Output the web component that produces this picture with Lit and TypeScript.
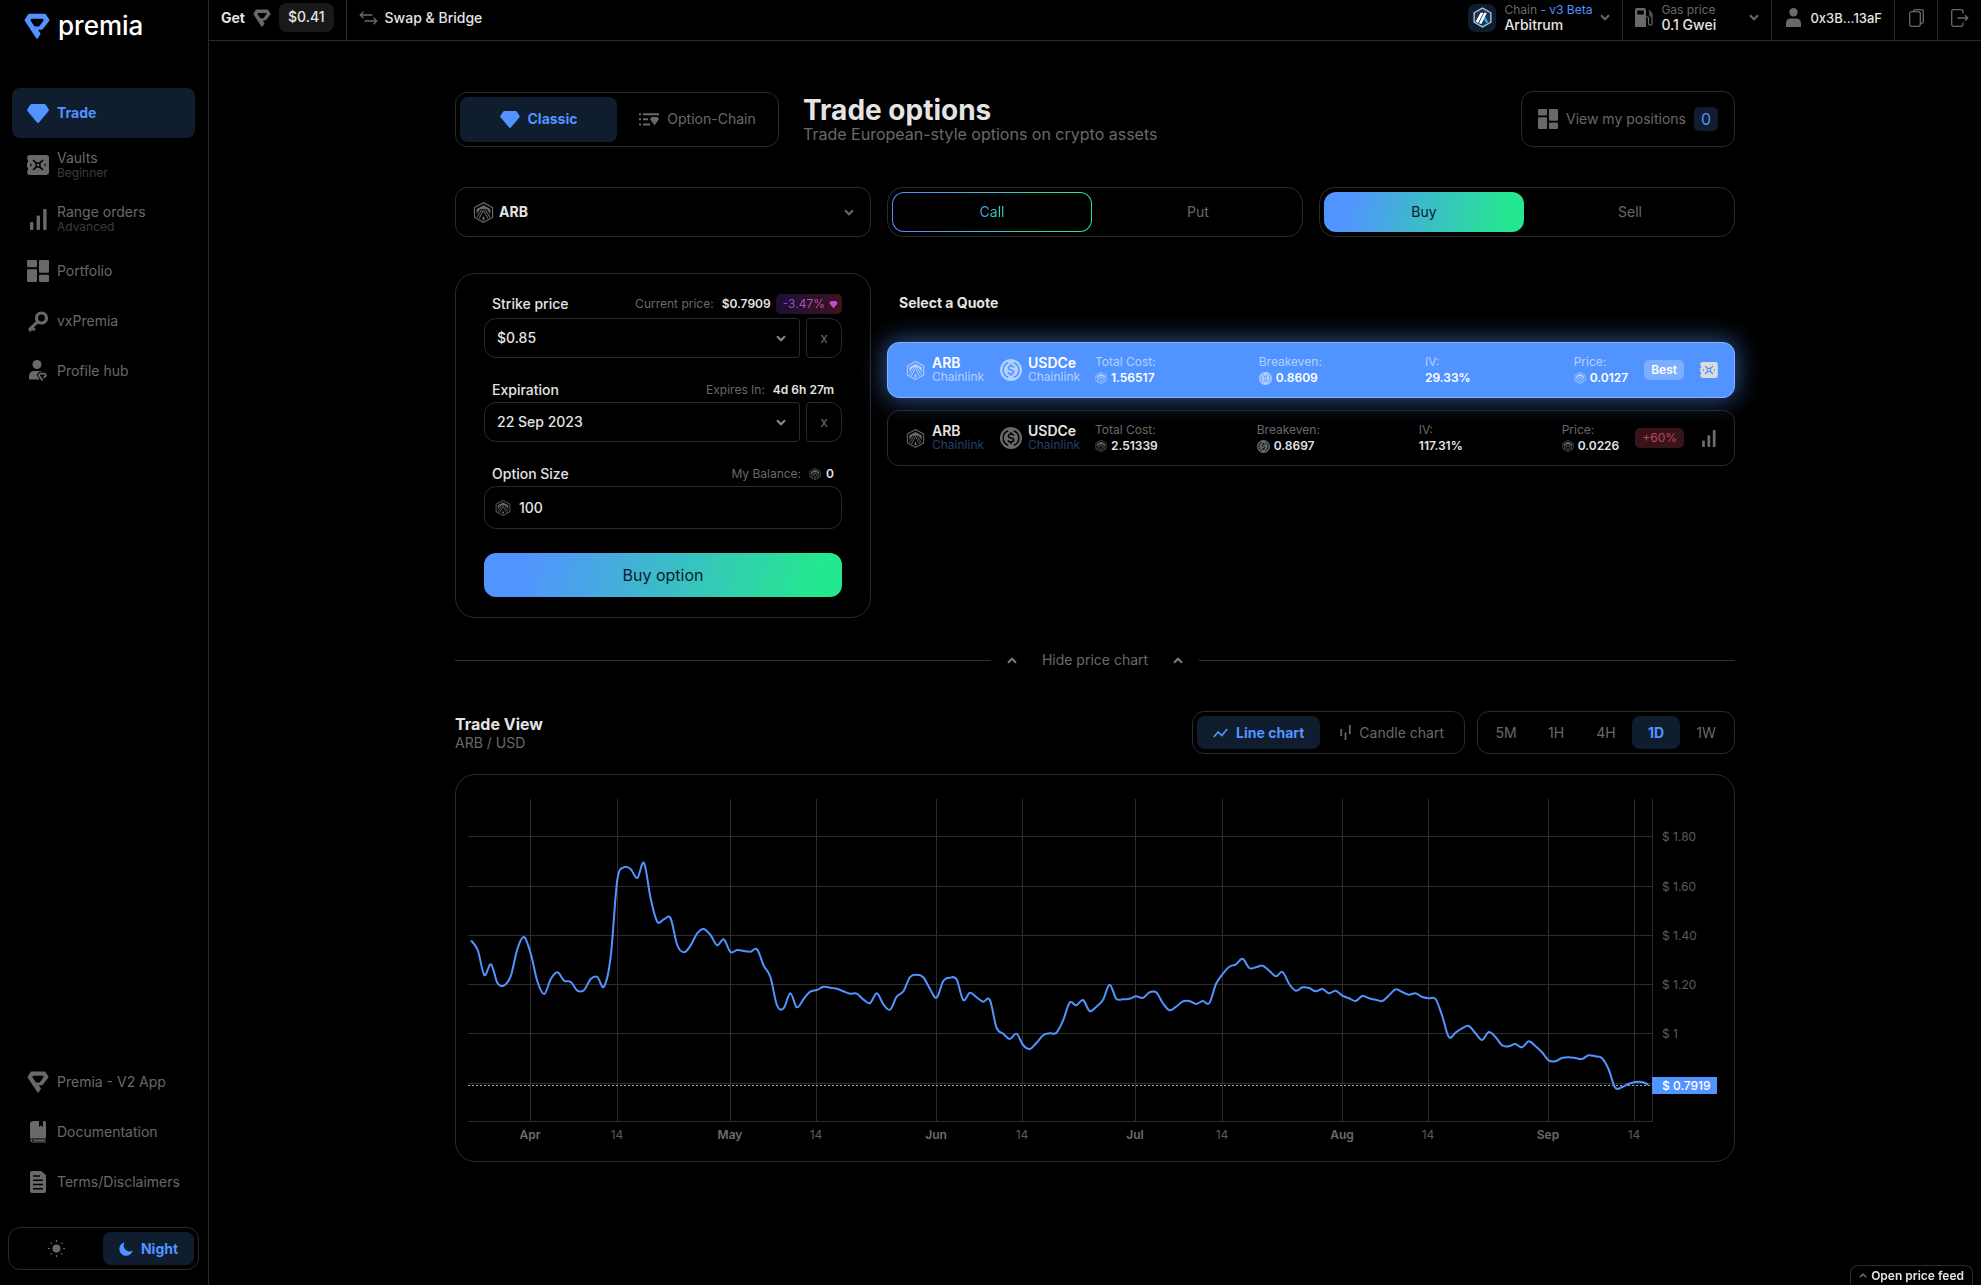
import { LitElement, html, svg, css, nothing, TemplateResult } from "lit";
import { customElement, state } from "lit/decorators.js";
import { classMap } from "lit/directives/class-map.js";

/* ---------- icons ---------- */

const icon = (w: number, h: number, box: string, body: unknown) =>
  html`<svg class="icon" width=${w} height=${h} viewBox=${box} fill="currentColor" aria-hidden="true">${body}</svg>`;

const premiaIcon = (size: number) =>
  icon(size, size, "0 0 26 26", svg`<path fill-rule="evenodd" d="M5.500.7h15q1 0 1.500.8l3.200 5q.5.800-.1 1.600L19 16q-.6.700-1.500.7h-3.400l2.200 3.600q.4.700 0 1.300l-2.500 3.600q-.8 1-1.600 0L.9 8.100q-.6-.8-.1-1.600L4 1.500Q4.500.7 5.500.7zM7.400 5.700 6.300 7.200l4.300 6.300h4.400l4.800-6.300-1-1.500z"/>`);

const diamondIcon = (w = 22, h = 19) =>
  icon(w, h, "0 0 22 19", svg`<path d="M4.600 0h12.800q.8 0 1.300.7l2.800 4.200q.8 1.200-.1 2.300l-9.200 11.100q-1.200 1.400-2.400 0L.6 7.200q-.9-1.100-.1-2.300L3.300.7Q3.800 0 4.600 0z"/>`);

const vaultIcon = (w = 22, h = 20) =>
  icon(w, h, "0 0 22 20", svg`
    <path d="M3 0h16q3 0 3 3v14q0 3-3 3H3q-3 0-3-3v-1.500h1v-3H0v-5h1v-3H0V3q0-3 3-3z"/>
    <path d="m6 5 3.600 3.400M16 5l-3.600 3.400M6 15l3.600-3.400M16 15l-3.600-3.400" stroke="var(--cut)" stroke-width="1.600"/>
    <path d="M4 8.800v2.400m14-2.400v2.400" stroke="var(--cut)" stroke-width="1.200"/>
    <rect x="9" y="8" width="4" height="4" rx="1.500" fill="none" stroke="var(--cut)" stroke-width="1.500"/>`);

const barsIcon = (w = 17, h = 21) =>
  icon(w, h, "0 0 17 21", svg`<rect x="0" y="13" width="3.400" height="8" rx="1"/><rect x="6.600" y="6.500" width="3.400" height="14.500" rx="1"/><rect x="13.200" y="0" width="3.400" height="21" rx="1"/>`);

const tilesIcon = (w = 22) =>
  icon(w, w, "0 0 22 22", svg`<rect width="10" height="7.200" rx="1.200"/><rect y="9.200" width="10" height="12.800" rx="1.200"/><rect x="12" width="10" height="12.800" rx="1.200"/><rect x="12" y="14.800" width="10" height="7.200" rx="1.200"/>`);

const keyIcon = icon(22, 21, "0 0 22 21", svg`
  <circle cx="14.500" cy="7" r="5" fill="none" stroke="currentColor" stroke-width="3.200"/>
  <path d="m10.800 10.600-8.600 8M5 16l2.600 3.400M2.200 17.800l2 2.200" fill="none" stroke="currentColor" stroke-width="2.800"/>`);

const profileIcon = icon(20, 22, "0 0 20 22", svg`
  <circle cx="9" cy="4.500" r="4.500"/>
  <path d="M1 19.500v-3q0-5.500 5.500-5.500h5q2 0 3.200.8H11L8.800 15l3 4.500z"/>
  <path d="M14.600 20.600 11 15.500l1.200-1.900h4.600l1.200 1.900-2.400 2.400" fill="none" stroke="currentColor" stroke-width="1.800"/>`);

const bookIcon = icon(16, 22, "0 0 16 22", svg`
  <path d="M3 0h6v6l2-1.500L13 6V0h1.500q1.500 0 1.500 1.500V17H2.500q-1 0-2.500 1V3q0-3 3-3z"/>
  <path d="M16 21H3q-2 0-2-1.500T3 18h13M3.500 19.500H15" fill="none" stroke="currentColor" stroke-width="1.200"/>`);

const pageIcon = icon(16, 22, "0 0 16 22", svg`
  <path d="M2 0h9l5 4v16q0 2-2 2H2q-2 0-2-2V2q0-2 2-2z"/>
  <path d="M3 5h7M3 9.300h10M3 13.500h10M3 17.700h10" stroke="var(--cut)" stroke-width="1.600"/>`);

const sunIcon = icon(17, 17, "0 0 17 17", svg`
  <circle cx="8.500" cy="8.500" r="4"/>
  <path d="M8.500 0v2m0 13v2M0 8.500h2m13 0h2M2.600 2.600l1.300 1.300m9.200 9.200 1.300 1.300m0-11.800-1.300 1.300M3.900 13.100l-1.300 1.300" stroke="currentColor" stroke-width="1.200"/>`);

const moonIcon = icon(14, 14, "0 0 14 14", svg`<path d="M5.600.3a6.800 6.800 0 1 0 8.100 8.300A6 6 0 0 1 5.600.3z"/>`);

const chevron = (up = false) =>
  icon(10, 7, "0 0 10 7", svg`<path d=${up ? "m1 5.700 4-4 4 4" : "m1 1.300 4 4 4-4"} fill="none" stroke="currentColor" stroke-width="2"/>`);

const swapIcon = icon(19, 14, "0 0 19 14", svg`
  <path d="M13.500 4H1.200m3.300-3.300L1.200 4l3.300 3.300M5.500 10h12.300m-3.300-3.300 3.300 3.300-3.300 3.300" fill="none" stroke="currentColor" stroke-width="1.300"/>`);

const gasIcon = icon(18, 19, "0 0 18 19", svg`
  <path fill-rule="evenodd" d="M2 0h7q2 0 2 2v17H0V2q0-2 2-2zm.2 2.500v4h6.600v-4z"/>
  <path d="M11 9h1.500q1 0 1 1v5.500a1.700 1.700 0 0 0 3.500 0V6l-3-3.500M17 8h-2V5" fill="none" stroke="currentColor" stroke-width="1.200"/>`);

const personIcon = icon(15, 19, "0 0 15 19", svg`<circle cx="7.500" cy="4.200" r="4.200"/><path d="M0 19v-3.500q0-5 5-5h5q5 0 5 5V19z"/>`);

const copyIcon = icon(15, 18, "0 0 15 18", svg`
  <rect x=".7" y="2.700" width="10.600" height="14.600" rx="2"/><path d="M4.500 2.500Q4.500.7 6.300.7h6.200q1.800 0 1.800 1.800v10q0 1.800-2.500 1.800"/>`);

const exitIcon = icon(18, 18, "0 0 18 18", svg`<path d="M12 4.500v-2Q12 .7 10.200.7H2.500Q.7.7.7 2.500v13q0 1.800 1.800 1.800h7.700q1.800 0 1.800-1.800v-2M6.500 9h10.300M14 6.200 16.800 9 14 11.800"/>`);

const chainIcon = icon(19, 21, "0 0 18 20", svg`
  <path d="m9 1 8 4.500v9L9 19l-8-4.500v-9z" fill="#213147" stroke="#9dcced" stroke-width="1.300"/>
  <path d="m11.300 9 3.400 5.300-2 1.300-2.600-4.200z" fill="#28a0f0"/>
  <path d="M7.200 5.500H10L4.800 15.200l-2.300-1.300zM10.700 5.500h2.400L8 16.300l-2.300-.8z" fill="#fff"/>`);

const arbIcon = (w: number) =>
  icon(w, w, "0 0 20 20", svg`
    <path d="m10 .6 8.600 4.700v9.400L10 19.400l-8.600-4.700V5.300z" fill="none" stroke="currentColor" stroke-width="1.100"/>
    <path d="M3.500 11.500V6.700L10 3.100l6.500 3.600v4.800L13.200 7H6.800z"/>
    <path d="m8.200 7.600-4.500 7M10 8l-4.300 7.800M11.800 7.600l4.500 7M10 8l4.300 7.800" fill="none" stroke="currentColor" stroke-width="1"/>
    <path d="m10 13 1.400 3.200L10 17.600l-1.400-1.400z"/>`);

const usdcIcon = (w: number) =>
  icon(w, w, "0 0 22 22", svg`
    <circle cx="11" cy="11" r="11"/>
    <path d="M8.200 3.700a7.800 7.800 0 0 0 0 14.600M13.800 3.700a7.800 7.800 0 0 1 0 14.600M13.700 8.700q-.4-1.700-2.700-1.700t-2.600 1.900Q8.400 10.500 11 11t2.700 2.200Q13.500 15 11 15t-2.800-1.900M11 5v2m0 8v2" fill="none" stroke="var(--cut)" stroke-width="1.500"/>`);

const listIcon = icon(20, 13, "0 0 20 13", svg`
  <path d="M0 1.200h2m2 0h16M0 6.200h2m2 0h5M0 11.500h2m2 0h7" stroke="currentColor" stroke-width="2"/>
  <path d="M12.500 4h6l1.500 2.200-4.500 6-4.500-6z"/>`);

const lineIcon = icon(15, 10, "0 0 15 10", svg`<path d="m.8 9 4.400-5 3.600 3.600L14.200 1" fill="none" stroke="currentColor" stroke-width="1.700"/>`);

const candleIcon = icon(11, 15, "0 0 11 15", svg`<path d="M1.200 4v7M5.500 7.500V15M9.800 0v9" stroke="currentColor" stroke-width="1.700"/>`);

/* ---------- data ---------- */

interface NavItem { label: string; note?: string; icon: TemplateResult; }

const NAV: NavItem[] = [
  { label: "Trade", icon: diamondIcon() },
  { label: "Vaults", note: "Beginner", icon: vaultIcon() },
  { label: "Range orders", note: "Advanced", icon: barsIcon() },
  { label: "Portfolio", icon: tilesIcon() },
  { label: "vxPremia", icon: keyIcon },
  { label: "Profile hub", icon: profileIcon },
];

const LINKS: NavItem[] = [
  { label: "Premia - V2 App", icon: premiaIcon(22) },
  { label: "Documentation", icon: bookIcon },
  { label: "Terms/Disclaimers", icon: pageIcon },
];

const QUOTES = [
  { cost: "1.56517", even: "0.8609", iv: "29.33%", price: "0.0127", badge: "Best" },
  { cost: "2.51339", even: "0.8697", iv: "117.31%", price: "0.0226", badge: "+60%" },
];

// One sample per day from 23 March, in thirds of a chart unit; 87 is the plot's top edge.
const SAMPLES = [
  511, 540, 615, 583, 640, 646, 617, 535, 501, 553, 635, 672, 627, 607, 632, 636, 662, 660, 627, 621,
  650, 560, 330, 292, 297, 324, 279, 385, 455, 448, 445, 525, 547, 527, 490, 477, 495, 526, 508, 546,
  540, 543, 545, 538, 587, 620, 706, 715, 670, 712, 687, 665, 660, 650, 653, 656, 664, 671, 671, 689,
  699, 670, 703, 719, 680, 664, 621, 614, 622, 657, 683, 633, 623, 628, 690, 668, 682, 695, 690, 773,
  791, 807, 791, 825, 837, 819, 796, 790, 788, 752, 698, 706, 690, 723, 710, 690, 644, 686, 688, 686,
  679, 684, 667, 667, 699, 721, 710, 694, 693, 702, 693, 699, 642, 612, 590, 583, 566, 594, 592, 587,
  602, 619, 606, 642, 662, 652, 654, 664, 657, 670, 662, 677, 685, 693, 678, 685, 689, 693, 676, 658,
  666, 674, 670, 681, 685, 687, 738, 801, 788, 775, 768, 790, 810, 786, 801, 826, 829, 822, 832, 814,
  828, 847, 871, 874, 864, 862, 864, 867, 856, 859, 864, 897, 953, 952, 942, 936, 936, 944,
];

const MONTHS: [number, string][] = [
  [62, "Apr"], [149, "14"], [262, "May"], [348, "14"], [468, "Jun"], [554, "14"],
  [667, "Jul"], [754, "14"], [874, "Aug"], [960, "14"], [1080, "Sep"], [1166, "14"],
];

const LEVELS: [number, string][] = [
  [37, "$ 1.80"], [87, "$ 1.60"], [136, "$ 1.40"], [185, "$ 1.20"], [234, "$ 1"], [284, ""],
];

const curve = (): string => {
  const pts = SAMPLES.map((s, i) => [3 + i * 6.652, s / 3 - 29]);
  let d = `M${pts[0][0]} ${pts[0][1]}`;
  for (let i = 0; i < pts.length - 1; i++) {
    const a = pts[Math.max(0, i - 1)], b = pts[i], c = pts[i + 1], e = pts[Math.min(pts.length - 1, i + 2)];
    const n = [b[0] + (c[0] - a[0]) / 6, b[1] + (c[1] - a[1]) / 6, c[0] - (e[0] - b[0]) / 6, c[1] - (e[1] - b[1]) / 6, c[0], c[1]];
    d += "C" + n.map((v) => v.toFixed(1)).join(" ");
  }
  return d;
};

/* ---------- shared styles ---------- */

const base = css`
  *, *::before, *::after { box-sizing: border-box; }
  .icon { display: block; flex: none; }
  button, select, input {
    font: inherit; color: inherit; background: none; border: 0; margin: 0; padding: 0;
    border-radius: 0; appearance: none; outline-offset: 2px;
  }
  button, select { cursor: pointer; }
  a { color: inherit; text-decoration: none; }
  h1, h2, p { margin: 0; }
`;

/* ---------- sidebar ---------- */

@customElement("premia-sidebar")
export class PremiaSidebar extends LitElement {
  static styles = [base, css`
    :host {
      display: flex; flex-direction: column; width: 209px; flex: none;
      border-right: 1px solid var(--line); color: var(--dim); font-size: 14px; line-height: 18px;
    }
    .logo { display: flex; align-items: center; gap: 8px; height: 52px; padding-left: 24px; color: var(--blue); }
    .word { color: #fff; font-size: 26px; line-height: 28px; font-weight: 500; }
    .nav { display: flex; flex-direction: column; padding: 36px 13px 0 12px; }
    .links { display: flex; flex-direction: column; padding: 0 13px 0 12px; margin-top: auto; }
    .item { display: flex; align-items: center; height: 50px; padding-left: 15px; gap: 8px; border-radius: 8px; }
    .item.tall { height: 54px; }
    .item.on { background: var(--tint); color: var(--blue); font-weight: 700; }
    .glyph { display: flex; justify-content: center; width: 22px; }
    .text { display: flex; flex-direction: column; }
    .tall .text { padding-bottom: 2px; }
    .note { font-size: 12px; line-height: 12px; color: #3c3c3c; }
    .theme {
      display: grid; grid-template-columns: 1fr 91px; gap: 4px; margin: 20px 9px 15px 8px; padding: 4px;
      height: 43px; border: 1px solid var(--line); border-radius: 12px;
    }
    .mode { display: flex; align-items: center; justify-content: center; gap: 8px; border-radius: 8px; }
    .mode.on { background: var(--tint); color: var(--blue); font-weight: 700; }
  `];

  private item(n: NavItem, on = false) {
    return html`<a href="#" class=${classMap({ item: true, on, tall: !!n.note })}>
      <span class="glyph">${n.icon}</span>
      <span class="text">${n.label}${n.note ? html`<span class="note">${n.note}</span>` : nothing}</span>
    </a>`;
  }

  render() {
    return html`
      <a class="logo" href="#">${premiaIcon(26)}<span class="word">premia</span></a>
      <nav class="nav">${NAV.map((n, i) => this.item(n, i === 0))}</nav>
      <div class="links">${LINKS.map((n) => this.item(n))}</div>
      <div class="theme">
        <button class="mode" aria-label="Day">${sunIcon}</button>
        <button class="mode on">${moonIcon}Night</button>
      </div>`;
  }
}

/* ---------- top bar ---------- */

@customElement("premia-topbar")
export class PremiaTopbar extends LitElement {
  static styles = [base, css`
    :host { display: flex; height: 41px; border-bottom: 1px solid var(--line); color: var(--text); font-size: 14px; line-height: 16px; font-weight: 500; }
    .cell { display: flex; align-items: center; padding: 0 12px 5px; border-right: 1px solid var(--line); }
    .cell:last-child, .swap { border-right: 0; }
    .get { gap: 8px; font-weight: 700; }
    .dim { color: var(--dim); display: flex; }
    .chip { background: #191919; border-radius: 8px; padding: 6px 9px 7px; font-weight: 500; }
    .swap { gap: 7px; }
    .grow { flex: 1; }
    .two { display: flex; flex-direction: column; align-items: flex-start; white-space: nowrap; }
    .small { font-size: 12px; line-height: 15px; color: var(--dim); font-weight: 400; }
    .blue { color: var(--blue); }
    .logo { display: grid; place-items: center; width: 28px; height: 28px; border-radius: 8px; background: var(--tint); }
    .chain { gap: 8px; }
    .gas { gap: 8px; width: 149px; }
    .push { margin-left: auto; }
    .user { gap: 9px; padding-left: 14px; padding-right: 12px; font-size: 13px; }
    .tool { width: 43px; justify-content: center; padding-left: 0; padding-right: 0; color: var(--dim); }
    .tool .icon { fill: none; stroke: currentColor; stroke-width: 1.300; }
  `];

  render() {
    return html`
      <a class="cell get" href="#">Get <span class="dim">${premiaIcon(18)}</span><span class="chip">$0.41</span></a>
      <a class="cell swap" href="#"><span class="dim">${swapIcon}</span>Swap &amp; Bridge</a>
      <span class="grow"></span>
      <button class="cell chain">
        <span class="logo">${chainIcon}</span>
        <span class="two"><span class="small">Chain <span class="blue">- v3 Beta</span></span>Arbitrum</span>
        <span class="dim">${chevron()}</span>
      </button>
      <button class="cell gas">
        <span class="dim">${gasIcon}</span>
        <span class="two"><span class="small">Gas price</span>0.1 Gwei</span>
        <span class="dim push">${chevron()}</span>
      </button>
      <button class="cell user"><span class="dim">${personIcon}</span>0x3B...13aF</button>
      <button class="cell tool" aria-label="Copy address">${copyIcon}</button>
      <button class="cell tool" aria-label="Disconnect">${exitIcon}</button>`;
  }
}

/* ---------- order form ---------- */

@customElement("order-form")
export class OrderForm extends LitElement {
  static styles = [base, css`
    :host { display: block; }
    .card {
      display: flex; flex-direction: column; gap: 20px; padding: 20px 28px; border: 1px solid var(--line);
      border-radius: 20px; color: var(--text); font-size: 14px; line-height: 18px; font-weight: 500;
    }
    .head { display: flex; align-items: center; height: 24px; padding: 0 8px; }
    .head.flush { padding: 0 0 4px 8px; }
    .hint { margin-left: auto; margin-right: 8px; font-size: 12px; font-weight: 400; color: var(--dim); }
    .value { display: flex; align-items: center; gap: 5px; font-size: 12px; font-weight: 600; }
    .value .icon { color: var(--dim); }
    .drop {
      display: flex; align-items: center; gap: 4px; height: 20px; margin-left: 5px; padding: 0 4px 0 7px; border-radius: 5px;
      background: linear-gradient(90deg, #1c1038, #3b1420); font-size: 12px; font-weight: 400; color: #c04dd0;
    }
    .tone { background: linear-gradient(90deg, #8f4be6, #dd4f96); background-clip: text; color: transparent; }
    .line { display: flex; gap: 6px; }
    .pick { display: grid; flex: 1; align-items: center; height: 40px; border: 1px solid var(--line); border-radius: 12px 4px 4px 12px; }
    .pick select, .pick .icon { grid-area: 1 / 1; }
    .pick select { height: 100%; padding: 0 12px; }
    .pick .icon { justify-self: end; margin-right: 13px; color: #8a8a8a; pointer-events: none; }
    .clear { width: 36px; border: 1px solid var(--line); border-radius: 4px 12px 12px 4px; color: var(--dim); font-weight: 400; }
    .size { display: flex; align-items: center; gap: 8px; height: 43px; padding: 0 10px; border: 1px solid var(--line); border-radius: 12px; }
    .size .icon { color: var(--dim); }
    .size input { flex: 1; min-width: 0; }
    .buy { height: 44px; margin-top: 4px; border-radius: 12px; background: var(--grad); color: #0c1c2c; font-size: 16px; font-weight: 400; }
    option { background: #000; }
  `];

  render() {
    return html`<form class="card" @submit=${(e: Event) => e.preventDefault()}>
      <div>
        <div class="head flush">
          <label for="strike">Strike price</label><span class="hint">Current price:</span>
          <span class="value">$0.7909</span>
          <span class="drop"><span class="tone">-3.47%</span>${diamondIcon(9, 7)}</span>
        </div>
        <div class="line">
          <div class="pick"><select id="strike"><option>$0.85</option></select>${chevron()}</div>
          <button type="button" class="clear" aria-label="Clear strike">x</button>
        </div>
      </div>
      <div>
        <div class="head"><label for="expiry">Expiration</label><span class="hint">Expires In:</span><span class="value">4d 6h 27m</span></div>
        <div class="line">
          <div class="pick"><select id="expiry"><option>22 Sep 2023</option></select>${chevron()}</div>
          <button type="button" class="clear" aria-label="Clear expiration">x</button>
        </div>
      </div>
      <div>
        <div class="head"><label for="size">Option Size</label><span class="hint">My Balance:</span><span class="value">${arbIcon(12)}0</span></div>
        <div class="size">${arbIcon(16)}<input id="size" value="100" inputmode="decimal"></div>
      </div>
      <button class="buy">Buy option</button>
    </form>`;
  }
}

/* ---------- quotes ---------- */

@customElement("quote-list")
export class QuoteList extends LitElement {
  static styles = [base, css`
    :host { display: flex; flex-direction: column; gap: 12px; color: var(--text); }
    .title { padding: 20px 12px 0; height: 57px; font-size: 14px; line-height: 20px; font-weight: 700; }
    .quote {
      display: flex; align-items: center; height: 56px; padding: 0 16px 0 18px; border: 1px solid var(--line);
      border-radius: 12px; text-align: left; font-size: 14px; line-height: 14px; font-weight: 600; color: var(--text);
      --soft: var(--dim); --source: #22406e;
    }
    .quote.best {
      background: var(--blue); border-color: #86b2ff; color: #fff; --soft: #b4d0ff; --source: #b4d0ff; --cut: var(--blue);
      box-shadow: 0 0 24px 2px rgba(82, 148, 255, 0.55);
    }
    .icon { color: var(--soft); }
    .asset { display: grid; grid-template-columns: auto 1fr; align-items: center; column-gap: 7px; width: 94px; }
    .asset.quoted { width: 95px; column-gap: 6px; }
    .source { font-size: 12px; font-weight: 400; color: var(--source); }
    .names { display: flex; flex-direction: column; }
    .stats { display: flex; flex: 1; justify-content: space-between; font-size: 12px; line-height: 16px; }
    .label { display: block; font-weight: 400; color: var(--soft); }
    .figure { display: flex; align-items: center; gap: 4px; }
    .badge { height: 20px; margin: 0 16px; padding: 0 7px; border-radius: 5px; background: #37141a; color: #b8495a; font-size: 12px; line-height: 20px; font-weight: 400; }
    .best .badge { background: #7eaeff; color: #fff; font-weight: 600; }
    .kind { display: grid; place-items: center; width: 18px; --soft: #6d6d6d; }
    .best .kind { --soft: #dcdcdc; }
  `];

  render() {
    return html`
      <h2 class="title">Select a Quote</h2>
      ${QUOTES.map((q, i) => html`<button class=${classMap({ quote: true, best: i === 0 })}>
        <span class="asset">${arbIcon(19)}<span class="names">ARB<span class="source">Chainlink</span></span></span>
        <span class="asset quoted">${usdcIcon(22)}<span class="names">USDCe<span class="source">Chainlink</span></span></span>
        <span class="stats">
          <span><span class="label">Total Cost:</span><span class="figure">${arbIcon(12)}${q.cost}</span></span>
          <span><span class="label">Breakeven:</span><span class="figure">${usdcIcon(13)}${q.even}</span></span>
          <span><span class="label">IV:</span><span class="figure">${q.iv}</span></span>
          <span><span class="label">Price:</span><span class="figure">${arbIcon(12)}${q.price}</span></span>
        </span>
        <span class="badge">${q.badge}</span>
        <span class="kind">${i === 0 ? vaultIcon(18, 16) : barsIcon(14, 17)}</span>
      </button>`)}`;
  }
}

/* ---------- price chart ---------- */

@customElement("price-chart")
export class PriceChart extends LitElement {
  static styles = [base, css`
    :host { display: block; padding: 24px 12px 12px; border: 1px solid var(--line); border-radius: 20px; }
    .plot { display: block; width: 100%; height: auto; font-size: 12px; }
    .grid { stroke: #2d2d2d; shape-rendering: crispEdges; }
    .axis { fill: #5c5c5c; }
    .month { font-weight: 600; fill: #6c6c6c; }
    .now { stroke: #8ea6c8; stroke-dasharray: 2 2; shape-rendering: crispEdges; }
    .trend { fill: none; stroke: var(--blue); stroke-width: 2; stroke-linejoin: round; }
    .tag { fill: var(--blue); }
    .tagtext { fill: #fff; font-weight: 500; }
  `];

  render() {
    return html`<svg class="plot" viewBox="0 0 1254 350" role="img" aria-label="ARB / USD price">
      ${MONTHS.map(([x, t]) => svg`<line class="grid" x1=${x + 0.5} x2=${x + 0.5} y1="0" y2="322"/>
        <text class=${t === "14" ? "axis" : "month"} x=${x} y="340" text-anchor="middle">${t}</text>`)}
      ${LEVELS.map(([y, t]) => svg`<line class="grid" x1="0" x2="1184" y1=${y + 0.5} y2=${y + 0.5}/>
        <text class="axis" x="1194" y=${y + 5}>${t}</text>`)}
      <path class="grid" d="M0 322.500H1184.500V0" fill="none"/>
      <line class="now" x1="0" x2="1184" y1="286.500" y2="286.500"/>
      <path class="trend" d=${curve()}/>
      <rect class="tag" x="1184" y="278" width="65" height="17"/>
      <text class="tagtext" x="1194" y="291">$ 0.7919</text>
    </svg>`;
  }
}

/* ---------- page ---------- */

@customElement("app-root")
export class AppRoot extends LitElement {
  @state() private view = "Line chart";
  @state() private span = "1D";

  static styles = [base, css`
    :host {
      --line: #2b2b2b; --text: #e4e4e4; --dim: #696969; --blue: #5294ff; --tint: #0f1d2f; --cut: #000;
      --grad: linear-gradient(100deg, #5294ff 12%, #3fb6d0 45%, #24e88f 92%);
      display: flex; min-height: 100vh; background: #000; color: var(--text);
      font-family: Inter, "Liberation Sans", sans-serif; font-size: 14px; line-height: 18px;
    }
    .body { flex: 1; min-width: 0; }
    .main { width: 100%; max-width: 1280px; margin: 0 auto; padding: 50px 0 40px; }
    .intro { display: flex; align-items: center; height: 56px; }
    .seg { display: flex; gap: 4px; padding: 4px; border: 1px solid var(--line); border-radius: 12px; }
    .opt { display: flex; align-items: center; justify-content: center; gap: 8px; border-radius: 8px; color: var(--dim); white-space: nowrap; }
    .opt.on { background: var(--tint); color: var(--blue); font-weight: 700; }
    .style { display: grid; grid-template-columns: 157px 153px; }
    .style .opt { height: 45px; }
    .heading { margin-left: 24px; }
    .heading h1 { font-size: 28px; line-height: 30px; font-weight: 700; }
    .heading p { font-size: 16px; line-height: 18px; color: var(--dim); }
    .positions { display: flex; align-items: center; gap: 8px; height: 56px; margin-left: auto; padding: 0 16px; border: 1px solid var(--line); border-radius: 12px; color: var(--dim); }
    .count { display: grid; place-items: center; width: 24px; height: 24px; border-radius: 5px; background: var(--tint); color: var(--blue); font-size: 16px; }
    .cols { display: grid; grid-template-columns: repeat(3, minmax(0, 1fr)); gap: 36px 16px; margin-top: 40px; }
    .asset { display: grid; align-items: center; height: 50px; border: 1px solid var(--line); border-radius: 12px; color: var(--dim); }
    .asset > * { grid-area: 1 / 1; }
    .asset select { height: 100%; padding-left: 43px; color: var(--text); font-weight: 700; }
    .asset option { background: #000; }
    .coin { margin-left: 17px; pointer-events: none; }
    .arrow { justify-self: end; margin-right: 16px; pointer-events: none; }
    .pair { display: grid; grid-template-columns: 1fr 1fr; gap: 6px; height: 50px; padding: 4px; border: 1px solid var(--line); border-radius: 16px; }
    .side { display: grid; place-items: center; border-radius: 12px; color: var(--dim); }
    .side.solid { background: var(--grad); color: #0c1c2c; }
    .side.ring { border: 1px solid transparent; background: linear-gradient(#000, #000) padding-box, var(--grad) border-box; }
    .tone { background: linear-gradient(90deg, #52a0f0, #2fd8a6); background-clip: text; color: transparent; }
    .quotes { grid-column: span 2; }
    .fold { display: flex; align-items: center; width: 100%; height: 20px; margin-top: 32px; gap: 16px; color: #7c7c7c; }
    .fold::before, .fold::after { content: ""; flex: 1; height: 1px; background: #333; }
    .fold .words { padding: 0 9px; color: var(--dim); }
    .bar { display: flex; align-items: center; gap: 12px; height: 43px; margin: 41px 0 20px; }
    .pairname { margin-right: auto; color: var(--dim); }
    .pairname h2 { font-size: 16px; line-height: 20px; font-weight: 700; color: var(--text); }
    .view .opt { height: 33px; padding: 0 16px; }
    .spans { gap: 2px; }
    .spans .opt { width: 48px; height: 33px; }
    .feed {
      position: fixed; right: 8px; bottom: 0; display: flex; align-items: center; gap: 4px; height: 20px; padding: 0 8px;
      border: 1px solid var(--line); border-bottom: 0; border-radius: 8px 8px 0 0; background: #000; color: var(--text);
      font-size: 12px; font-weight: 600;
    }
    .feed .icon { color: var(--dim); width: 8px; }
  `];

  render() {
    const views: [string, TemplateResult][] = [["Line chart", lineIcon], ["Candle chart", candleIcon]];
    return html`
      <premia-sidebar></premia-sidebar>
      <div class="body">
        <premia-topbar></premia-topbar>
        <main class="main">
          <header class="intro">
            <div class="seg style">
              <button class="opt on">${diamondIcon(20, 17)}Classic</button>
              <button class="opt">${listIcon}Option-Chain</button>
            </div>
            <div class="heading"><h1>Trade options</h1><p>Trade European-style options on crypto assets</p></div>
            <a class="positions" href="#">${tilesIcon(20)}View my positions<span class="count">0</span></a>
          </header>
          <div class="cols">
            <div class="asset">
              <select aria-label="Asset"><option>ARB</option></select>
              <span class="coin">${arbIcon(21)}</span><span class="arrow">${chevron()}</span>
            </div>
            <div class="pair"><button class="side ring"><span class="tone">Call</span></button><button class="side">Put</button></div>
            <div class="pair"><button class="side solid">Buy</button><button class="side">Sell</button></div>
            <order-form></order-form>
            <quote-list class="quotes"></quote-list>
          </div>
          <button class="fold">${chevron(true)}<span class="words">Hide price chart</span>${chevron(true)}</button>
          <div class="bar">
            <div class="pairname"><h2>Trade View</h2>ARB / USD</div>
            <div class="seg view">${views.map(([t, g]) => html`<button
              class=${classMap({ opt: true, on: this.view === t })} @click=${() => (this.view = t)}>${g}${t}</button>`)}</div>
            <div class="seg spans">${["5M", "1H", "4H", "1D", "1W"].map((t) => html`<button
              class=${classMap({ opt: true, on: this.span === t })} @click=${() => (this.span = t)}>${t}</button>`)}</div>
          </div>
          <price-chart></price-chart>
        </main>
      </div>
      <button class="feed">${chevron(true)}Open price feed</button>`;
  }
}
